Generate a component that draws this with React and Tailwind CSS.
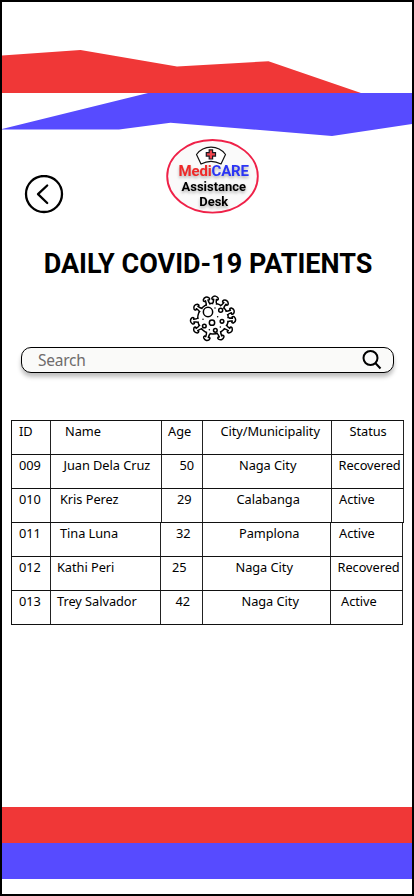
const upper = 'grid-cols-[39px_111px_41px_129px_72px]';
const lower = 'grid-cols-[39px_110px_42px_128px_72px]';

const rows = [
  { cols: upper, cells: [['ID', 'pl-[7px]'], ['Name', 'pl-[14px]'], ['Age', 'pl-[6px]'], ['City/Municipality', 'pl-[17.500px]'], ['Status', 'pl-[17.500px]']] },
  { cols: upper, cells: [['009', 'pl-[7px]'], ['Juan Dela Cruz', 'pl-[12.500px]'], ['50', 'pl-[17.500px]'], ['Naga City', 'pl-[36px]'], ['Recovered', 'pl-[6.500px]']] },
  { cols: upper, cells: [['010', 'pl-[7px]'], ['Kris Perez', 'pl-[9px]'], ['29', 'pl-[15px]'], ['Calabanga', 'pl-[33.500px]'], ['Active', 'pl-[7px]']] },
  { cols: lower, cells: [['011', 'pl-[7px]'], ['Tina Luna', 'pl-[9px]'], ['32', 'pl-[15px]'], ['Pamplona', 'pl-[36px]'], ['Active', 'pl-[8px]']] },
  { cols: lower, cells: [['012', 'pl-[7px]'], ['Kathi Peri', 'pl-[6px]'], ['25', 'pl-[11px]'], ['Naga City', 'pl-[32.500px]'], ['Recovered', 'pl-[6.500px]']] },
  { cols: lower, cells: [['013', 'pl-[7px]'], ['Trey Salvador', 'pl-[6px]'], ['42', 'pl-[14.500px]'], ['Naga City', 'pl-[38.500px]'], ['Active', 'pl-[10px]']] },
];

const spikes = [-109, -84, -52, -22, 3, 34, 67, 108, 146, 174, 215];

function Waves() {
  return (
    <svg className="block h-[136px] w-full shrink-0" viewBox="2 2 410 136">
      <path d="M2 55.500 80.5 50 177 66.6 268.5 61.2 361 93H2Z" fill="#f03737" />
      <path d="M2 129 148 93H412V124L332 136 170.500 122.800 119 129.500H2Z" fill="#574bff" />
    </svg>
  );
}

function BackButton() {
  return (
    <button aria-label="Back" className="mt-[37px] ml-[22px] h-10 w-10">
      <svg viewBox="0 0 40 40" fill="none" stroke="#000">
        <circle cx="20" cy="19" r="18" strokeWidth="2.3" />
        <path d="M23.200 10.500 14 19.200 23.200 28" strokeWidth="2.300" strokeLinecap="round" strokeLinejoin="round" />
      </svg>
    </button>
  );
}

function Logo() {
  return (
    <svg className="ml-[100px] h-[78px] w-[98px]" viewBox="164 138 98 78" fontFamily="Roboto, sans-serif" fontWeight="700">
      <ellipse cx="212.500" cy="176.300" rx="45.300" ry="36.300" fill="#fafafa" stroke="#ef2148" strokeWidth="1.900" />
      <path d="M201 164 196.500 154.500Q202 147.200 211 147.200T225.500 154.500L221 164Q211 158.800 201 164Z" fill="#fff" stroke="#111" strokeWidth="1.200" strokeLinejoin="round" />
      <path d="M209.200 149.800h3.400v2.900h2.900v3.400h-2.900v2.900h-3.400v-2.900h-2.900v-3.400h2.900Z" fill="#f0444c" stroke="#191923" strokeWidth="1.200" />
      <g className="drop-shadow-[0_2px_1.500px_rgba(0,0,0,0.3)]">
        <text x="178.500" y="175.600" fontSize="15" textLength="70.500" fill="#ef2929">
          Medi<tspan fill="#2b35f5">CARE</tspan>
        </text>
        <text x="181.500" y="191.300" fontSize="13.300" textLength="64.500" lengthAdjust="spacingAndGlyphs">Assistance</text>
        <text x="199.300" y="206.300" fontSize="13.300" textLength="29" lengthAdjust="spacingAndGlyphs">Desk</text>
      </g>
    </svg>
  );
}

function Virus() {
  return (
    <svg className="mt-[12px] ml-[186px] h-[50px] w-[50px] shrink-0" viewBox="23 23 150 150" fill="#fff" stroke="#000" strokeWidth="4.500" strokeLinejoin="round">
      <circle cx="98" cy="97" r="46" />
      {spikes.map((angle) => (
        <g key={angle} transform={`translate(98 97) rotate(${angle})`}>
          <path d="M43-6Q50-4 58-4L57-8Q59-11 63-9Q68-5 68 0T63 9Q59 11 57 8L58 4Q50 4 43 6" />
          <path d="M43-3V3" stroke="#fff" strokeWidth="8" />
        </g>
      ))}
      <circle cx="83" cy="77" r="14" />
      <circle cx="121" cy="72" r="6" />
      <circle cx="95" cy="109" r="8" />
      <circle cx="125" cy="105" r="5.500" />
      <circle cx="72" cy="119" r="5.500" />
      <circle cx="105" cy="132" r="5.500" />
      <g fill="#000" stroke="none">
        <circle cx="104" cy="65" r="2.300" />
        <circle cx="68" cy="99" r="2.300" />
        <circle cx="112" cy="91" r="2.300" />
        <circle cx="87" cy="130" r="2.300" />
        <circle cx="120" cy="122" r="2.300" />
      </g>
    </svg>
  );
}

export default function App() {
  return (
    <main className="flex h-[896px] w-[414px] flex-col overflow-hidden border-2 border-black bg-white font-['Noto_Sans',sans-serif] text-black">
      <Waves />
      <header className="flex h-[78px] shrink-0 items-start">
        <BackButton />
        <Logo />
      </header>
      <h1 className="mt-[30px] h-9 shrink-0 pl-[2px] text-center font-['Roboto',sans-serif] text-[27px] leading-9 font-bold whitespace-nowrap">
        DAILY COVID-19 PATIENTS
      </h1>
      <Virus />
      <label className="mt-[3px] ml-[19px] flex h-[26px] w-[373px] shrink-0 items-center justify-between rounded-[10px] border border-black bg-[#fafaf9] pr-[11px] pl-4 shadow-[0_4px_4px_rgba(0,0,0,0.25)]">
        <span className="text-[15.5px] leading-6 tracking-[-0.25px] text-[#6f6b6b]">Search</span>
        <svg className="h-5 w-5" viewBox="0 0 20 20" fill="none" stroke="#000" strokeWidth="2">
          <circle cx="8.500" cy="8" r="7" />
          <path d="M13.300 13 18.500 18.500" />
        </svg>
      </label>
      <section role="table" className="mt-[47px] ml-[9px] w-[393px] shrink-0 border-t border-[#111] text-[12.8px] leading-5 tracking-[-0.05px]">
        {rows.map((row) => (
          <div role="row" key={row.cells[0][0]} className={`grid h-[34px] w-fit border-b border-l border-[#111] ${row.cols}`}>
            {row.cells.map(([text, inset]) => (
              <div role="cell" key={text} className={`border-r border-[#222] whitespace-nowrap ${inset}`}>
                {text}
              </div>
            ))}
          </div>
        ))}
      </section>
      <footer className="mt-auto mb-[15px]">
        <div className="h-9 bg-[#f03737]" />
        <div className="h-9 bg-[#574bff]" />
      </footer>
    </main>
  );
}
